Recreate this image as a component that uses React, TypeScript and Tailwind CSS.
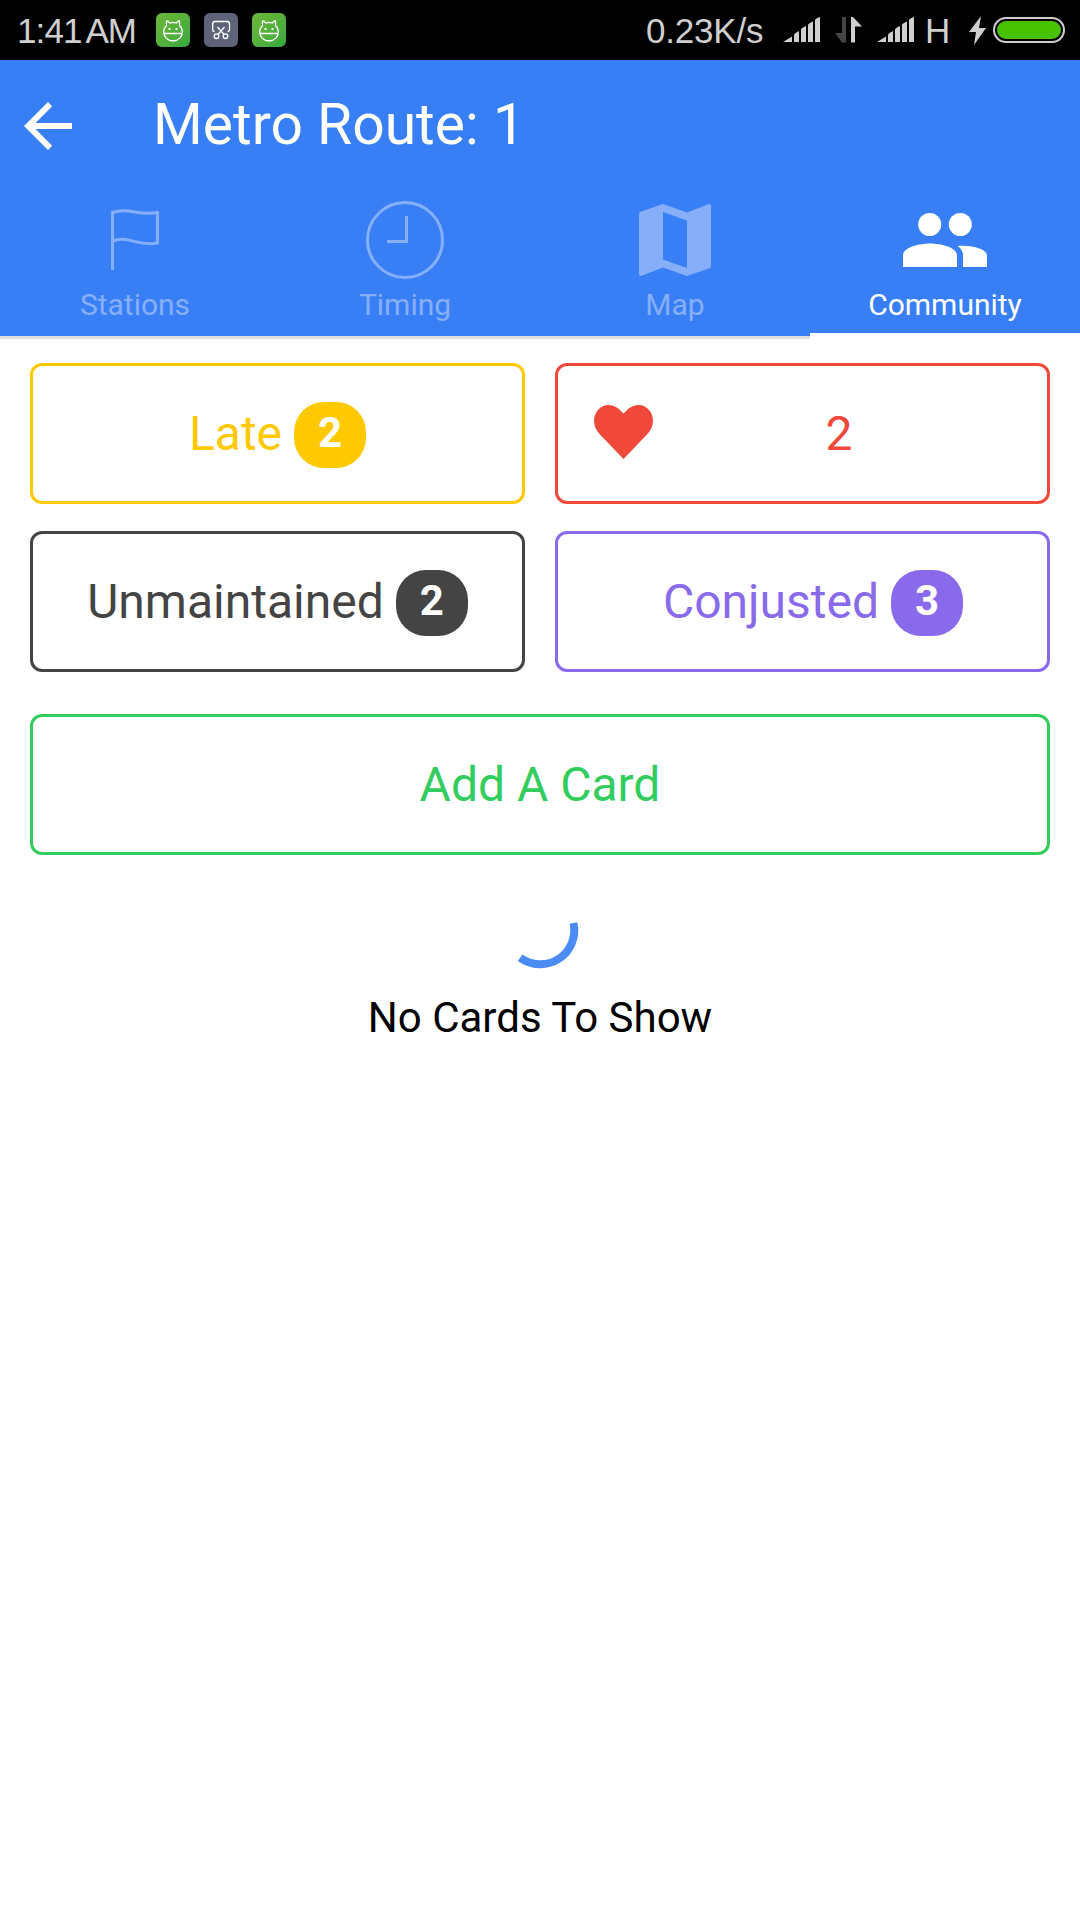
import React from "react";

const outline = "flex h-[141px] items-center justify-center rounded-xl border-[3px] text-[48px] leading-none";
const badge = "ml-3 mt-[2px] flex h-[66px] w-[72px] items-start justify-center rounded-[30px] pt-[7px] text-[42px] leading-[48px] font-bold text-white";

function Cat() {
  return (
    <div className="flex size-[34px] items-center justify-center rounded-md bg-linear-to-br from-[#6cb93a] to-[#35a83c]">
      <svg width="34" height="34" viewBox="0 0 34 34" fill="none" stroke="white" strokeWidth="1.3">
        <path d="M10.5 12.500 L10.500 8 Q12 7.500 13.500 10 Q17 9 20.500 10 Q22 7.500 23.500 8 L23.500 12.500 Q26.300 15 26.300 19 A9.300 9 0 0 1 7.700 19 Q7.700 15 10.500 12.500 Z M7.700 20.500 H26.300" />
        <path d="M12.500 16 h2 M19.500 16 h2" strokeWidth="1.800" />
      </svg>
    </div>
  );
}

function Scissors() {
  return (
    <div className="flex size-[34px] items-center justify-center rounded-md bg-[#5d6479]">
      <svg width="34" height="34" viewBox="0 0 34 34" fill="none" stroke="white" strokeWidth="1.3">
        <path d="M10.500 18.500 Q8.700 18.500 8.700 16.500 V11 Q8.700 8.500 11.200 8.500 H23 Q25.500 8.500 25.500 11 V16.500 Q25.500 18.500 23.700 18.500 M13.500 14 L20 21.500 M20.500 14 L14 21.500" />
        <circle cx="12.500" cy="23.200" r="2.300" />
        <circle cx="21.500" cy="23.200" r="2.300" />
      </svg>
    </div>
  );
}

function Signal() {
  return (
    <svg width="38" height="26" viewBox="0 0 38 26" fill="#cfcfcf">
      <path d="M0 25 L9 19.500 V25Z M11 18 Q11 16.500 16 14 V25 H11Z M18 12.500 Q18 11 23 9 V25 H18Z M25 8 Q25 6.500 30 4.500 V25 H25Z M32 3.500 Q32 1.500 37 0 V25 H32Z" />
    </svg>
  );
}

function StatusBar() {
  return (
    <div className="flex h-[60px] items-center bg-black pl-[17px] pr-[15px] font-['Liberation_Sans',sans-serif] text-[35px] leading-[34px] text-[#cfcfcf]">
      <span className="w-[139px] whitespace-nowrap pt-[2px] tracking-[-0.9px] [word-spacing:-3px]">1:41 AM</span>
      <div className="flex gap-[14px]">
        <Cat />
        <Scissors />
        <Cat />
      </div>
      <span className="ml-auto w-[137px] whitespace-nowrap pt-[2px] tracking-[-0.2px]">0.23K/s</span>
      <Signal />
      <svg className="ml-[14px]" width="28" height="26" viewBox="0 0 28 26">
        <path d="M11 0 V25.500 H7 L0 16 H7 V0Z" fill="#444" />
        <path d="M16 25.500 V0 H18 L27 9.500 H20 V25.500Z" fill="#cfcfcf" />
      </svg>
      <span className="ml-[14px] flex"><Signal /></span>
      <span className="ml-[10px] w-[44px] pt-[2px]">H</span>
      <svg width="17" height="29" viewBox="0 0 17 29" fill="#cfcfcf">
        <path d="M12 0 L0 16 H7 L5 29 L17 12 H10Z" />
      </svg>
      <div className="ml-[7px] h-[26px] w-[72px] rounded-full border-2 border-[#cfcfcf] p-[2px]">
        <div className="h-full rounded-full bg-[#47c203]" />
      </div>
    </div>
  );
}

function Tab({ label, active, children }: { label: string; active?: boolean; children: React.ReactNode }) {
  return (
    <div className={active ? "flex flex-1 flex-col items-center text-white" : "flex flex-1 flex-col items-center text-[#87aff9]"}>
      <div className="flex h-[84px] items-center">{children}</div>
      <span className="mt-[5px] text-[30px] leading-[36px]">{label}</span>
      {active && <div className="mt-auto h-[3px] w-full bg-white" />}
    </div>
  );
}

export default function App() {
  return (
    <div className="h-[1920px] w-[1080px] bg-white font-[Roboto,sans-serif]">
      <StatusBar />
      <header className="h-[276px] bg-[#387ff5]">
        <div className="flex h-[138px] items-center">
          <svg className="ml-6 mt-[-6px]" width="48" height="48" viewBox="0 0 48 48" fill="white">
            <path d="M48 21 V27 H11.500 L28.200 43.800 L24 48 L0 24 L24 0 L28.200 4.200 L11.500 21Z" />
          </svg>
          <h1 className="ml-[81px] mt-[-8px] text-[57px] leading-[68px] text-white">Metro Route: 1</h1>
        </div>
        <nav className="flex h-[138px]">
          <Tab label="Stations">
            <svg className="mt-[-2px]" width="50" height="62" viewBox="0 0 50 62" fill="none" stroke="currentColor" strokeWidth="3">
              <path d="M2.500 62 V4.500 C18 -1 28 8 47.500 4.500 V35 C28 39 18 27 2.500 33" />
            </svg>
          </Tab>
          <Tab label="Timing">
            <svg width="78" height="78" viewBox="0 0 78 78" fill="none" stroke="currentColor" strokeWidth="3">
              <circle cx="39" cy="39" r="37.500" />
              <path d="M40.500 15 V40.500 H21" />
            </svg>
          </Tab>
          <Tab label="Map">
            <svg width="72" height="72" viewBox="0 0 72 72" fill="currentColor" fillRule="evenodd">
              <path d="M70 0 L48 8.500 L24 0 L1.500 7.800 Q0 8.400 0 9.500 V70.200 Q0 72 2 72 L24 63.500 L48 72 L70.500 64.200 Q72 63.600 72 62.500 V1.800 Q72 0 70 0Z M48 64 L24 55.500 V8 L48 16.500Z" />
            </svg>
          </Tab>
          <Tab label="Community" active>
            <svg width="84" height="54" viewBox="0 0 84 54" fill="currentColor">
              <circle cx="26.700" cy="11.500" r="11.500" />
              <circle cx="57.300" cy="11.500" r="11.500" />
              <path d="M0 54 V42.500 C0 34 17 30.500 27 30.500 C37 30.500 54 34 54 42.500 V54Z M60 54 V42.500 Q60 36.500 54.500 33 C65 32 84 35 84 42.500 V54Z" />
            </svg>
          </Tab>
        </nav>
      </header>
      <div className="h-[3px] w-[810px] bg-[#dedede]" />
      <main className="px-[30px] pt-6">
        <div className="grid grid-cols-2 gap-x-[30px] gap-y-[27px]">
          <div className={outline + " border-[#ffc900] text-[#ffc900]"}>
            Late<span className={badge + " bg-[#ffc900]"}>2</span>
          </div>
          <div className={outline + " border-[#f0483a] text-[#f0483a]"}>
            <svg className="ml-9 mt-[-3px]" width="59" height="54" viewBox="0 0 59 54" fill="currentColor">
              <path d="M29.500 54 L5.500 29 C-9 13 8 -9 25 4 L29.500 8.500 L34 4 C51 -9 68 13 53.500 29Z" />
            </svg>
            <span className="flex-1 pr-[22px] text-center">2</span>
          </div>
          <div className={outline + " border-[#444444] text-[#444444]"}>
            Unmaintained<span className={badge + " bg-[#444444]"}>2</span>
          </div>
          <div className={outline + " border-[#886aea] pl-[21px] text-[#886aea]"}>
            Conjusted<span className={badge + " bg-[#886aea]"}>3</span>
          </div>
        </div>
        <div className={outline + " mt-[42px] border-[#33cd5f] text-[#33cd5f]"}>Add A Card</div>
        <div className="flex flex-col items-center pt-[36px]">
          <svg width="84" height="84" viewBox="0 0 84 84" fill="none" stroke="#4b8bf5" strokeWidth="8">
            <path d="M75.500 32 A34 34 0 0 1 22.200 66.700" />
          </svg>
          <p className="mt-[18px] text-[42px] leading-[50px] text-black">No Cards To Show</p>
        </div>
      </main>
    </div>
  );
}
